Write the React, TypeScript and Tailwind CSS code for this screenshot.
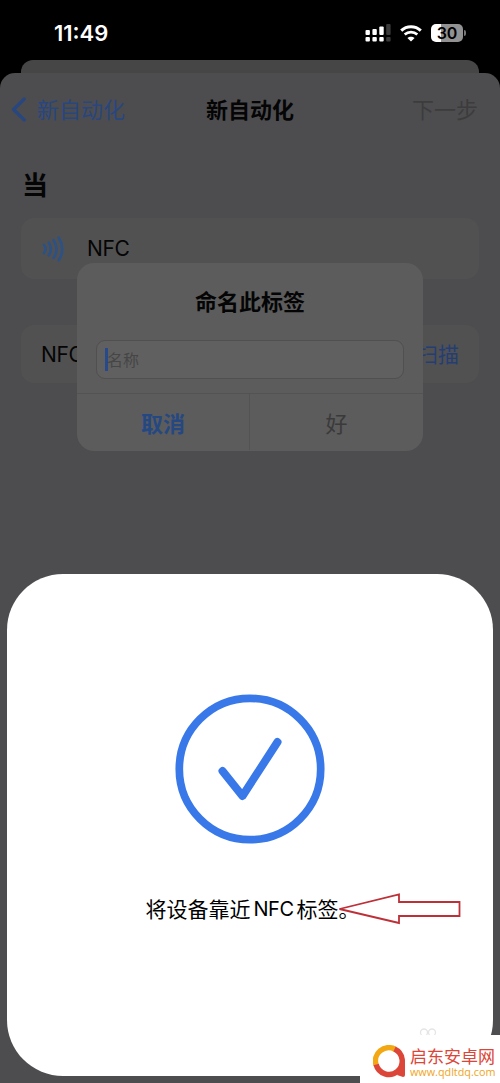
import React from 'react';

const StatusBar: React.FC = () => (
  <header className="flex h-[60px] items-start justify-between pl-[54px] pr-[34px] pt-[18px] text-white">
    <span className="font-['Inter','Liberation_Sans',sans-serif] text-[22px] font-semibold leading-[31px]">
      11:49
    </span>
    <div className="flex items-center pt-[6px]">
      {/* Dual SIM signal */}
      <svg width="26" height="18" viewBox="0 0 26 18" fill="currentColor">
        <rect x="0.5" y="6" width="4.4" height="5" rx="1" />
        <rect x="7.4" y="5" width="4.4" height="6" rx="1" />
        <rect x="14.3" y="2.5" width="4.4" height="8.5" rx="1" />
        <rect x="21.2" y="0" width="4.4" height="11" rx="1" fill="#3a3a3a" />
        <rect x="0.5" y="13" width="4.4" height="4.6" rx="1" />
        <rect x="7.4" y="13" width="4.4" height="4.6" rx="1" />
        <rect x="14.3" y="13" width="4.4" height="4.6" rx="1" />
        <rect x="21.2" y="13" width="4.4" height="4.6" rx="1" fill="#3a3a3a" />
      </svg>
      <svg className="ml-[9px]" width="22" height="17" viewBox="0 0 22 17" fill="none" stroke="currentColor">
        <path d="M1.2 5.6C6.8 .4 15.2 .4 20.8 5.6" strokeWidth="3" />
        <path d="M4.7 9.6c3.6-3.3 9-3.3 12.6 0" strokeWidth="2.7" />
        <path d="M7.4 13 11 16.6l3.6-3.6c-2-1.8-5.2-1.8-7.2 0Z" fill="currentColor" stroke="none" />
      </svg>
      <div className="ml-[9px] flex h-[18px] w-[32px] items-center justify-center rounded-[5px] bg-linear-to-r from-white from-[30%] to-[#929292] to-[30%] font-['Inter','Liberation_Sans',sans-serif] text-[16px] font-semibold leading-none text-black">
        30
      </div>
      <div className="ml-[1px] h-[6px] w-[2px] rounded-r-full bg-[#777]" />
    </div>
  </header>
);

const NavBar: React.FC = () => (
  <nav className="grid h-[73px] grid-cols-3 items-center text-[22px] leading-none">
    <div className="flex items-center pl-[11px] text-[#28467f]">
      <svg width="16" height="25" viewBox="0 0 16 25" fill="none" stroke="currentColor" strokeWidth="3.2" strokeLinecap="round" strokeLinejoin="round">
        <path d="M13.3 2 2.5 12.5 13.3 23" />
      </svg>
      <span className="mb-[3px] ml-[10px] whitespace-nowrap">新自动化</span>
    </div>
    <h1 className="pb-[3px] text-center font-bold">新自动化</h1>
    <span className="pb-[3px] pr-[22px] text-right text-[#3c3c3d]">下一步</span>
  </nav>
);

const NfcIcon: React.FC = () => (
  <svg width="22" height="26" viewBox="0 0 22 26" fill="none" stroke="#2b5187" strokeWidth="2.6" strokeLinecap="round">
    <path d="M2 9q3.2 4 0 8" />
    <path d="M6.7 6.5q4.4 6.500 0 13" />
    <path d="M11.600 4q5.800 9 0 18" />
    <path d="M16.700 1.500q7 11.500 0 23" />
  </svg>
);

const NameTagDialog: React.FC = () => (
  <section className="absolute left-[77px] top-[190px] flex h-[188px] w-[346px] flex-col overflow-hidden rounded-[17px] bg-[#5c5c5c]">
    <h3 className="mt-[25px] text-center text-[22px] font-bold leading-[24px]">命名此标签</h3>
    <div className="mx-[19px] mt-[28px] flex h-[39px] items-center rounded-[9px] border border-[#505051] bg-[#606060] pl-[8px]">
      <span className="h-[23px] w-[3px] bg-[#28498b]" />
      <span className="-ml-px mb-[2px] text-[16px] text-[#464646]">名称</span>
    </div>
    <div className="mt-auto grid h-[58px] grid-cols-2 border-t border-[#535353] pb-px text-[22px]">
      <button className="border-r border-[#535353] font-bold text-[#254883]">取消</button>
      <button className="text-[#3a3a3a]">好</button>
    </div>
  </section>
);

const ScanSheet: React.FC = () => (
  <section className="absolute left-[7px] top-[574px] flex h-[502px] w-[486px] flex-col items-center rounded-[56px] bg-white">
    <svg className="mt-[119px]" width="152" height="152" viewBox="0 0 152 152" fill="none" stroke="#3878e8">
      <circle cx="76" cy="76" r="70.7" strokeWidth="7.7" />
      <path d="M48.5 78 68.5 103 103.5 49" strokeWidth="8" strokeLinecap="round" strokeLinejoin="round" />
    </svg>
    <p className="mt-[49px] flex w-[209px] whitespace-nowrap text-[21px] leading-[28px] text-black">
      将设备靠近
      <span className="ml-[3px] mr-[3px] mt-px font-['Inter','Liberation_Sans',sans-serif] text-[20px] tracking-[-0.5px]">
        NFC
      </span>
      标签。
    </p>
  </section>
);

const PointerArrow: React.FC = () => (
  <svg className="absolute left-[337px] top-[891px]" width="126" height="36" viewBox="0 0 126 36" fill="none" stroke="#bd3038" strokeWidth="1.8">
    <path d="M2.5 18 62 3.5V11H122.5V25H62V32Z" />
  </svg>
);

const Watermark: React.FC = () => (
  <>
    <svg className="absolute left-[419px] top-[1027px]" width="19" height="10" viewBox="0 0 19 10" fill="none" stroke="#e5e5e5" strokeWidth="1.3">
      <circle cx="5" cy="5.5" r="3.5" />
      <circle cx="13" cy="5.5" r="3.5" />
    </svg>
    <footer className="absolute bottom-0 right-0 flex h-[48px] w-[140px] items-start bg-white pl-[13px] pt-[10px]">
      <svg width="33" height="33" viewBox="0 0 33 33" fill="none" strokeWidth="5.5">
        <path d="M3.1 20A13.3 13.3 0 0 1 22 4.2" stroke="#f3a813" />
        <path d="M21.5 4A13.3 13.3 0 1 1 3.1 19.5" stroke="#dc4638" />
        <path d="M32 16V30Q32 32 30 32L24 30Z" fill="#dc4638" stroke="none" />
      </svg>
      <div className="ml-[4px] mt-px whitespace-nowrap">
        <div className="text-[17px] leading-[19px] text-[#dc4638]">启东安卓网</div>
        <div className="font-['Open_Sans','Noto_Sans',sans-serif] text-[10.8px] leading-[14px] text-[#f0a51c]">
          www.qdltdq.com
        </div>
      </div>
    </footer>
  </>
);

const App: React.FC = () => {
  return (
    <div className="relative h-[1083px] w-[500px] overflow-hidden bg-black font-['Noto_Sans_CJK_SC',sans-serif] text-[#050506]">
      <StatusBar />
      <div className="mx-[21px] h-[13px] rounded-t-[12px] bg-[#464646]" />
      <main className="relative h-[1010px] rounded-t-[15px] bg-[#4d4d4f]">
        <NavBar />
        <h2 className="ml-[22px] mt-[23px] text-[26px] font-bold leading-[30px]">当</h2>
        <div className="mx-[21px] mt-[19px] flex h-[61px] items-center rounded-[13px] bg-[#515151] pl-[21px]">
          <NfcIcon />
          <span className="ml-[23px] mt-px font-['Inter','Liberation_Sans',sans-serif] text-[21px] tracking-[-0.4px]">NFC</span>
        </div>
        <div className="mx-[21px] mt-[46px] flex h-[58px] items-center justify-between rounded-[13px] bg-[#515151] px-[20px] text-[21px]">
          <span className="mt-[2px] font-['Inter','Liberation_Sans',sans-serif] tracking-[-0.4px]">NFC</span>
          <span className="text-[#243e75]">扫描</span>
        </div>
        <NameTagDialog />
      </main>
      <ScanSheet />
      <PointerArrow />
      <Watermark />
    </div>
  );
};

export default App;
